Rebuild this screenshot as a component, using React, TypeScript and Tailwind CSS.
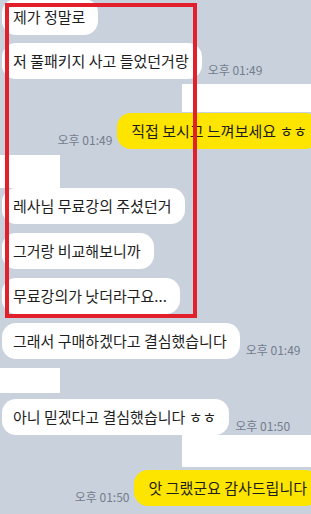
import type { FC, ReactNode } from 'react';

type Msg =
  | { kind: 'in'; text: string; time?: string; mt: string }
  | { kind: 'out'; text: string; time: string; mt: string }
  | { kind: 'blank'; side: 'left' | 'right'; mt: string; h: string };

const messages: Msg[] = [
  { kind: 'in', text: '제가 정말로', mt: '-mt-[1px]' },
  { kind: 'in', text: '저 풀패키지 사고 들었던거랑', time: '오후 01:49', mt: 'mt-[8px]' },
  { kind: 'blank', side: 'right', mt: 'mt-[5px]', h: 'h-[28px]' },
  { kind: 'out', text: '직접 보시고 느껴보세요 ㅎㅎ', time: '오후 01:49', mt: 'mt-[1px]' },
  { kind: 'blank', side: 'left', mt: 'mt-[6px]', h: 'h-[33px]' },
  { kind: 'in', text: '레사님 무료강의 주셨던거', mt: 'mt-0' },
  { kind: 'in', text: '그거랑 비교해보니까', mt: 'mt-[9px]' },
  { kind: 'in', text: '무료강의가 낫더라구요...', mt: 'mt-[9px]' },
  { kind: 'in', text: '그래서 구매하겠다고 결심했습니다', time: '오후 01:49', mt: 'mt-[9px]' },
  { kind: 'blank', side: 'left', mt: 'mt-[9px]', h: 'h-[25px]' },
  { kind: 'in', text: '아니 믿겠다고 결심했습니다 ㅎㅎ', time: '오후 01:50', mt: 'mt-[6px]' },
  { kind: 'blank', side: 'right', mt: 'mt-0', h: 'h-[32px]' },
  { kind: 'out', text: '앗 그랬군요 감사드립니다', time: '오후 01:50', mt: 'mt-[3px]' },
];

const Time: FC<{ children: ReactNode }> = ({ children }) => (
  <span className="mb-[2px] shrink-0 text-[12px] leading-[15px] text-[#737d8c]">{children}</span>
);

const Row: FC<{ msg: Msg }> = ({ msg }) => {
  if (msg.kind === 'blank') {
    return (
      <div className={`flex ${msg.mt} ${msg.side === 'right' ? 'justify-end' : 'justify-start'}`}>
        <div className={`${msg.h} ${msg.side === 'right' ? 'w-[129px]' : 'w-[60px]'} bg-white`} />
      </div>
    );
  }

  if (msg.kind === 'out') {
    return (
      <div className={`flex items-end justify-end gap-[5px] -mr-[8px] ${msg.mt}`}>
        <Time>{msg.time}</Time>
        <div className="flex h-[36px] items-center rounded-[14px] bg-[#fee500] pl-[14px] pr-[12px] text-[15px] text-[#1e1e1e]">
          {msg.text}
        </div>
      </div>
    );
  }

  return (
    <div className={`flex items-end gap-[6px] pl-[2px] ${msg.mt}`}>
      <div className="flex h-[36px] items-center rounded-[14px] bg-white pl-[11px] pr-[13px] text-[15px] text-[#1e1e1e]">
        {msg.text}
      </div>
      {msg.time ? <Time>{msg.time}</Time> : null}
    </div>
  );
};

export default function App() {
  return (
    <div
      className="relative h-[514px] w-[311px] overflow-hidden bg-[#c9d1dd]"
      style={{ fontFamily: '"Noto Sans CJK KR", "Noto Sans", sans-serif' }}
    >
      <div className="flex flex-col whitespace-nowrap">
        {messages.map((msg, i) => (
          <Row key={i} msg={msg} />
        ))}
      </div>
      {/* highlight box drawn over the chat */}
      <div className="pointer-events-none absolute left-[5px] top-[3px] h-[315px] w-[192px] border-4 border-[#e2202c]" />
    </div>
  );
}
